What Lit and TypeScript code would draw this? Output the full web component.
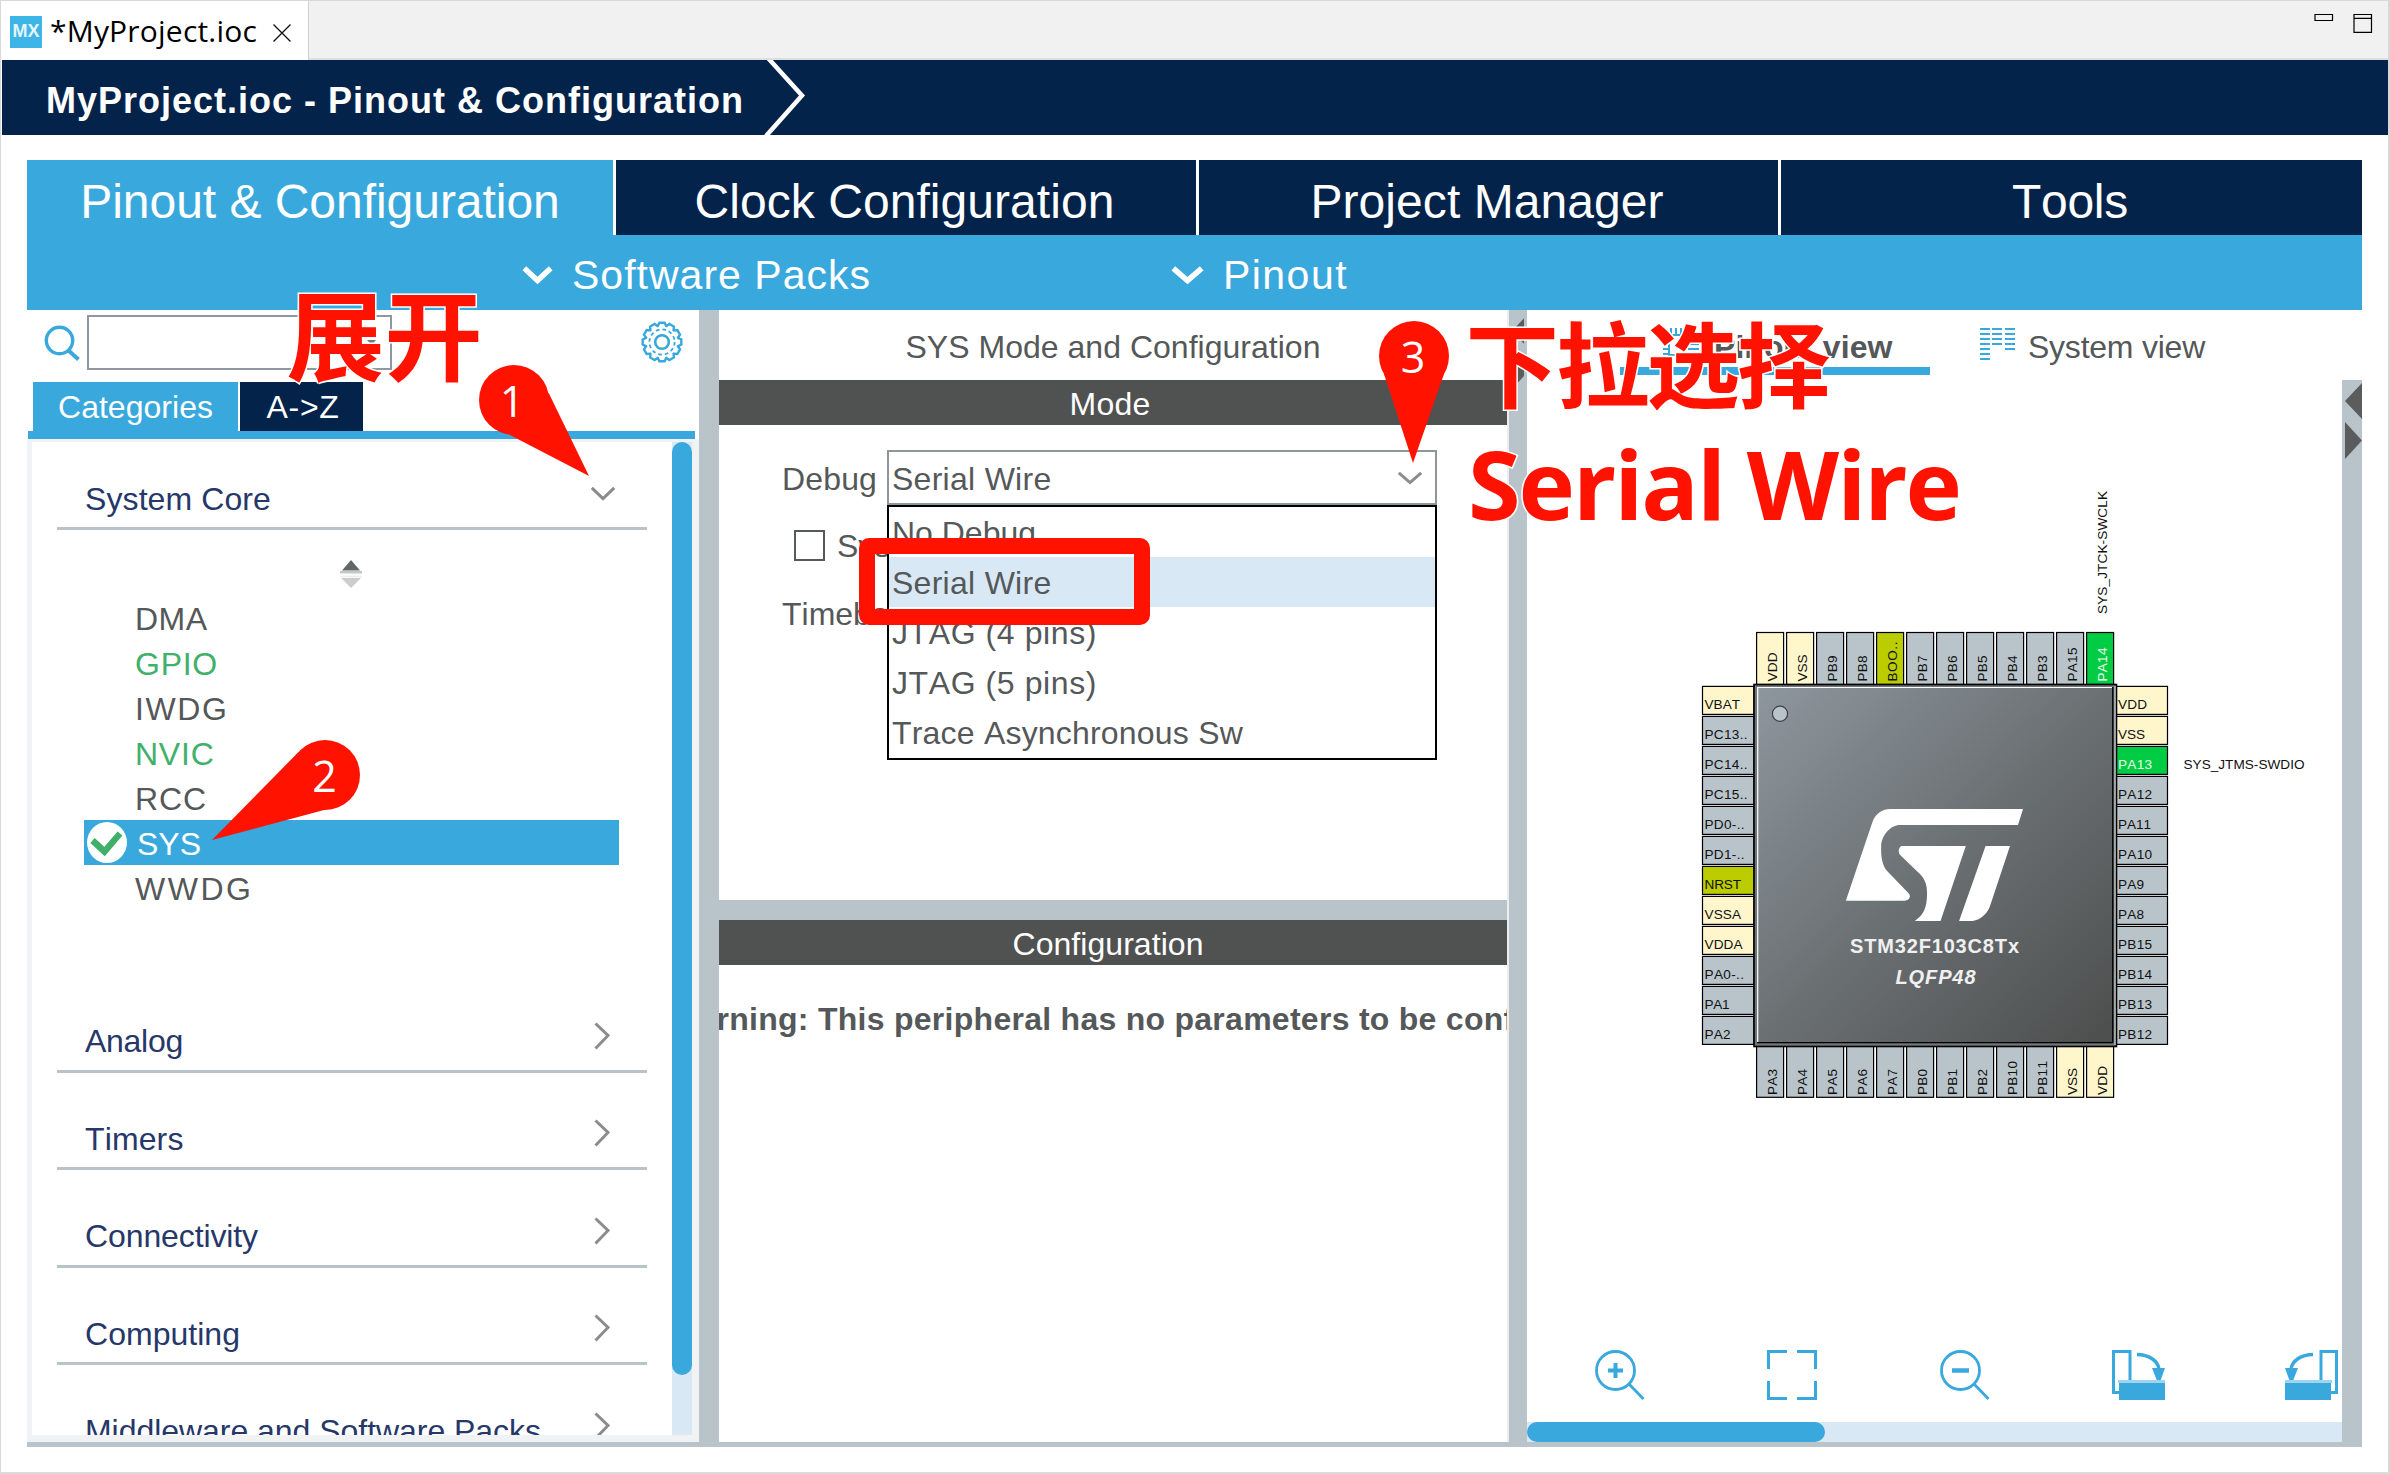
import { LitElement, html, svg, css, nothing } from "lit";
import { customElement, property } from "lit/decorators.js";
import { classMap } from "lit/directives/class-map.js";

/** One line of text whose tracking is computed so that it fills a given advance width. */
@customElement("fit-text")
class FitText extends LitElement {
  @property({ type: Number }) w = 0;
  @property() text = "";
  static styles = css`
    :host { display: inline-block; white-space: pre; flex: none; }
    .run { display: inline-block; white-space: pre; }
  `;
  protected updated() {
    const run = this.renderRoot.querySelector(".run") as HTMLElement;
    run.style.letterSpacing = "0";
    const natural = run.getBoundingClientRect().width;
    run.style.letterSpacing = `${(this.w - natural) / this.text.length}px`;
  }
  render() {
    return html`<span class="run">${this.text}</span>`;
  }
}

type Tone = "io" | "power" | "active" | "special";
interface Pin { name: string; tone: Tone; w: number; }
const pin = (name: string, w: number, tone: Tone = "io"): Pin => ({ name, w, tone });

const LEFT = [
  pin("VBAT", 35.5, "power"), pin("PC13..", 43), pin("PC14..", 43), pin("PC15..", 43), pin("PD0-..", 40), pin("PD1-..", 40),
  pin("NRST", 36.5, "special"), pin("VSSA", 36.5, "power"), pin("VDDA", 38, "power"), pin("PA0-..", 39.5), pin("PA1", 25), pin("PA2", 26),
];
const RIGHT = [
  pin("VDD", 29, "power"), pin("VSS", 27, "power"), pin("PA13", 34, "active"), pin("PA12", 34), pin("PA11", 33), pin("PA10", 34),
  pin("PA9", 26), pin("PA8", 26), pin("PB15", 34), pin("PB14", 34), pin("PB13", 34), pin("PB12", 34),
];
const TOP = [
  pin("VDD", 29, "power"), pin("VSS", 27, "power"), pin("PB9", 26), pin("PB8", 26), pin("BOO..", 40, "special"), pin("PB7", 26),
  pin("PB6", 26), pin("PB5", 26), pin("PB4", 26), pin("PB3", 26), pin("PA15", 34), pin("PA14", 34, "active"),
];
const BOTTOM = [
  pin("PA3", 26), pin("PA4", 26), pin("PA5", 26), pin("PA6", 26), pin("PA7", 26), pin("PB0", 26),
  pin("PB1", 26), pin("PB2", 26), pin("PB10", 34), pin("PB11", 34), pin("VSS", 27, "power"), pin("VDD", 29, "power"),
];
const FILL: Record<Tone, string> = { io: "#b8c4ca", power: "#fff6cc", active: "#02cc44", special: "#bbcc00" };

/** Package drawing of the microcontroller with its 48 pins. */
@customElement("chip-view")
class ChipView extends LitElement {
  static styles = css`
    :host { display: block; }
    svg { display: block; }
    .pin { stroke: #000; stroke-width: 1.2; }
    .lbl { font: 13.6px "Liberation Sans", sans-serif; fill: #111; font-kerning: none; }
    .on { fill: #e9ffe9; }
    .name { font: bold 20px "Liberation Sans", sans-serif; fill: #f0f0f0; }
    .it { font-style: italic; }
  `;
  private side(p: Pin, i: number, x: number, tx: number) {
    const y = 686.4 + i * 30;
    return svg`<rect class="pin" x=${x} y=${y} width="51.5" height="28" fill=${FILL[p.tone]}></rect>
      <text class=${p.tone === "active" ? "lbl on" : "lbl"} x=${tx} y=${y + 22.2} textLength=${p.w}>${p.name}</text>`;
  }
  private end(p: Pin, i: number, y: number, ty: number) {
    const x = 1756.6 + i * 30;
    return svg`<rect class="pin" x=${x} y=${y} width="27" height="52" fill=${FILL[p.tone]}></rect>
      <text class=${p.tone === "active" ? "lbl on" : "lbl"} transform="translate(${x + 20.8} ${ty}) rotate(-90)" textLength=${p.w}>${p.name}</text>`;
  }
  render() {
    return html`<svg width="815" height="960" viewBox="1527 380 815 960">
      <defs>
        <linearGradient id="body" x1="0" y1="0" x2="1" y2="1">
          <stop offset="0" stop-color="#8e979e"></stop>
          <stop offset="0.5" stop-color="#6b7073"></stop>
          <stop offset="1" stop-color="#4c4e4d"></stop>
        </linearGradient>
      </defs>
      ${LEFT.map((p, i) => this.side(p, i, 1702.5, 1704.5))}
      ${RIGHT.map((p, i) => this.side(p, i, 2116, 2118))}
      ${TOP.map((p, i) => this.end(p, i, 632.5, 681.5))}
      ${BOTTOM.map((p, i) => this.end(p, i, 1045.3, 1095))}
      <rect x="1754" y="684.5" width="362.5" height="362" fill="#6f7578" stroke="#000" stroke-width="1.6"></rect>
      <rect x="1757.5" y="687.5" width="355.5" height="355" fill="url(#body)"></rect>
      <path d="M1757.7 1042V687.5H2112" fill="none" stroke="#fff" stroke-width="1.2"></path>
      <path d="M2112.8 687V1042.6H1757" fill="none" stroke="#000" stroke-width="1.4"></path>
      <path d="M2115 686V1045" fill="none" stroke="#b8bcbe" stroke-width="1.4"></path>
      <circle cx="1780" cy="713.7" r="7.6" fill="#b8c4ca" stroke="#3c4144" stroke-width="1.2"></circle>
      <g transform="translate(1680 790) scale(.4209 .3333)" fill="#fff">
        <path d="M815 57H500C478 57 462 75 457 97L394 332H534C546 330 550 318 542 308L492 243C480 225 477 200 478 165C480 135 500 105 523 105H803Z"></path>
        <path d="M526 168H679L619 393H558C578 375 587 355 587 310C587 280 580 262 565 246L523 195C517 185 520 172 526 168Z"></path>
        <path d="M726 168H784L738 343C732 370 715 390 695 393H663Z"></path>
      </g>
      <text class="name" x="1850" y="953" textLength="169">STM32F103C8Tx</text>
      <text class="name it" x="1895.5" y="984" textLength="80">LQFP48</text>
      <text class="lbl" x="2183.5" y="768.6" textLength="121">SYS_JTMS-SWDIO</text>
      <text class="lbl" transform="translate(2107.4 614) rotate(-90)" textLength="123">SYS_JTCK-SWCLK</text>
    </svg>`;
  }
}

const chevDown = (w: number, h: number, c: string, sw: number) => html`<svg width=${w} height=${h} viewBox="0 0 ${w} ${h}">
  <path d="M${sw * 0.6} ${sw * 0.6}L${w / 2} ${h - sw * 0.8}L${w - sw * 0.6} ${sw * 0.6}" fill="none" stroke=${c} stroke-width=${sw}></path></svg>`;
const chevRight = html`<svg width="16" height="28" viewBox="0 0 16 28"><path d="M1.5 1.5L14 13.5L1.5 26.5" fill="none" stroke="#8c8c8c" stroke-width="3"></path></svg>`;

const ITEMS: [string, number, boolean][] = [
  ["DMA", 72.5, false], ["GPIO", 83, true], ["IWDG", 93.5, false], ["NVIC", 79.5, true], ["RCC", 72, false], ["SYS", 64, false], ["WWDG", 118.5, false],
];
const GROUPS: [string, number][] = [
  ["Analog", 98], ["Timers", 98.5], ["Connectivity", 173], ["Computing", 155], ["Middleware and Software Packs", 456],
];
const OPTIONS: [string, number][] = [
  ["No Debug", 144], ["Serial Wire", 159.5], ["JTAG (4 pins)", 205], ["JTAG (5 pins)", 205], ["Trace Asynchronous Sw", 351],
];

@customElement("app-root")
class AppRoot extends LitElement {
  static styles = css`
    :host { display: block; font-family: "Liberation Sans", Arial, sans-serif; font-kerning: none; font-size: 32px; color: #555859; }
    * { box-sizing: border-box; }
    svg { display: block; flex: none; }
    .window { position: relative; width: 2390px; height: 1474px; overflow: hidden; background: #fff;
      border: 1px solid #d8d8d8; border-right-width: 2px; border-bottom: 2px solid #dcdcdc; display: flex; flex-direction: column; }
    .strip { height: 59px; flex: none; display: flex; background: #f1f1f1; border-bottom: 2px solid #dedede; }
    .file { width: 308px; height: 59px; background: #fff; border-right: 1px solid #d0d0d0; display: flex; align-items: center;
      padding-left: 9px; color: #000; font-family: "Open Sans", "Noto Sans", sans-serif; font-size: 30px; }
    .mx { width: 32px; height: 32px; background: #3db5e6; color: #e4f5fc; font: bold 18px/31px "Liberation Sans", sans-serif; text-align: center; margin: 2px 8px 0 0; }
    .file svg { margin-left: 16px; margin-top: 4px; }
    .wins { margin-left: auto; display: flex; padding: 12px 15.5px 0 0; gap: 19px; }
    .crumb { height: 75px; flex: none; margin: 0 0 0 1px; background: #03234b; display: flex; align-items: center; color: #fff; font-weight: bold; font-size: 36px; padding-left: 44px; }
    .crumb fit-text { padding-top: 6px; }
    .crumb svg { margin-left: 20px; }
    .work { margin: 25px 0 0 26px; width: 2335px; height: 1287px; display: flex; flex-direction: column; border-bottom: 5px solid #b8c4ca; flex: none; }
    .tabs { display: grid; grid-template-columns: 586px 580px 579px 581px; gap: 3px; height: 75px; flex: none; }
    .tab { background: #03234b; color: #fff; font-size: 48px; display: flex; align-items: center; justify-content: center; padding: 7px 3px 0 0; }
    .cur { background: #39a8dc; padding-right: 0; }
    .sub { height: 75px; flex: none; background: #39a8dc; color: #fff; font-size: 41px; display: flex; align-items: center; padding: 5px 0 0 494px; gap: 18px; }
    .gap { margin-left: 281px; }
    .cols { flex: 1; min-height: 0; display: flex; }
    .left { width: 672px; display: flex; flex-direction: column; }
    .search { height: 72px; flex: none; display: flex; padding: 5px 16px 0 17px; }
    .search .lens { margin-top: 10px; }
    .field { width: 305px; height: 55px; border: 2px solid #8f989e; margin-left: 6px; display: flex; justify-content: flex-end; align-items: center; padding-right: 14px; }
    .gear { margin: 6px 0 0 auto; }
    .cats { height: 49px; flex: none; display: flex; gap: 2px; padding-left: 6px; color: #fff; }
    .cat { display: flex; align-items: center; justify-content: center; width: 205px; background: #39a8dc; padding-top: 1px; }
    .az { width: 123px; background: #03234b; padding-left: 3px; }
    .rule { height: 8px; flex: none; background: #39a8dc; margin: 0 4px 0 1px; }
    .tree { flex: 1; min-height: 0; display: flex; border: solid #f1f2f3; border-width: 3px 7px 7px 5px; overflow: hidden; background: #fff; }
    .list { width: 640px; padding-left: 25px; overflow: hidden; }
    .group { width: 590px; height: 97.5px; display: flex; align-items: flex-end; justify-content: space-between; padding: 0 37px 0 28px; border-bottom: 3.5px solid #b8c4ca; color: #263769; line-height: 36px; }
    .group fit-text { margin-bottom: 10.4px; }
    .group svg { margin-bottom: 20px; }
    .core { height: 88px; padding-right: 31px; }
    .core svg { margin-bottom: 26px; }
    .ips { height: 445px; width: 562px; margin-left: 27px; padding-top: 30px; }
    .sort { margin: 0 0 7px 256px; }
    .ip { height: 45px; padding: 4px 0 0 51px; display: flex; align-items: center; }
    .used { color: #41b06b; }
    .sel { background: #39a8dc; color: #fff; padding: 0 0 0 3px; width: 535px; }
    .sel fit-text { margin-left: 10px; padding-top: 3px; }
    .vbar { width: 20px; background: #d9e8f5; }
    .vthumb { height: 933px; border-radius: 10px; background: #39a8dc; }
    .split { width: 20px; background: #b8c4ca; }
    .mid { width: 790px; display: flex; flex-direction: column; overflow: hidden; border-right: 2px solid #ededed; }
    .title { height: 70px; flex: none; display: flex; align-items: center; justify-content: center; padding-top: 5px; }
    .bar { height: 45px; flex: none; background: #505251; color: #fff; display: flex; align-items: center; justify-content: center; padding: 3px 6px 0 0; }
    .cfg { padding-right: 10px; }
    .form { height: 475px; flex: none; padding-top: 25px; }
    .row { display: flex; align-items: center; height: 40px; padding-left: 63px; }
    .row > span { padding-top: 2px; }
    .dbg { height: 55px; }
    .dbg fit-text { padding-top: 3px; }
    .combo { position: relative; width: 550px; height: 55px; margin-left: 10px; border: 2px solid #8f9699; display: flex; align-items: center; justify-content: space-between; padding: 0 12px 0 3px; }
    .popup { position: absolute; left: -2px; top: 53px; width: 550px; border: 2px solid #000; background: #fff; z-index: 1; padding-bottom: 1px; }
    .opt { height: 50px; padding-left: 3px; display: flex; align-items: center; }
    .hot { background: #d9e8f5; }
    .chk { margin-top: 20px; padding-left: 75px; }
    .box { width: 31px; height: 31px; border: 2px solid #56595a; margin-right: 12px; }
    .tb { margin-top: 28px; }
    .hsplit { height: 20px; flex: none; background: #b8c4ca; }
    .warn { margin: 34px 0 0 -51px; font-weight: bold; line-height: 40px; white-space: pre; letter-spacing: 0.27px; }
    .div { width: 18px; background: #b8c4ca; padding: 3px 0 0 2px; }
    .right { width: 835px; display: flex; flex-direction: column; }
    .views { height: 70px; flex: none; display: flex; align-items: flex-start; }
    .view { display: flex; margin-left: 93px; width: 310px; height: 65px; border-bottom: 8px solid #39a8dc; font-weight: bold; padding: 18px 0 0 43px; gap: 13px; }
    .view fit-text, .sys fit-text { padding-top: 0.6px; line-height: 36px; }
    .sys { display: flex; padding-top: 18px; margin-left: 50px; gap: 13px; }
    .body { flex: 1; min-height: 0; display: flex; }
    .canvas { width: 815px; display: flex; flex-direction: column; }
    .tools { height: 82px; display: grid; grid-template-columns: 172px 173px 172px 173px 53px; padding: 10px 0 0 68px; }
    .hbar { height: 20px; background: #d9e8f5; }
    .hthumb { width: 298px; height: 20px; border-radius: 10px; background: #39a8dc; }
    .edge { width: 20px; background: #b8c4ca; padding: 2.6px 0 0 2px; }
    .notes { position: absolute; left: -1px; top: -1px; z-index: 3; }
    .num { font: 43px "Open Sans", "Noto Sans", sans-serif; fill: #fff; text-anchor: middle; }
    .zh { font: bold 98px "Noto Sans CJK SC", sans-serif; fill: #ff1200; stroke: #fff; stroke-width: 3px; paint-order: stroke; }
    .zh2 { font-size: 93.5px; }
    .en { font: bold 95.5px "Open Sans", "Noto Sans", sans-serif; fill: #ff1200; stroke: #fff; stroke-width: 3px; paint-order: stroke; }
  `;

  private arrows(w = 18) {
    return html`<svg width=${w} height="78" viewBox="0 0 ${w} 78"><path d="M18 0V36L1 18Z M1 39V76L18 57.5Z" fill="#5a5c5d"></path></svg>`;
  }

  private gear() {
    const teeth = Array.from({ length: 12 }, (_, i) => i * 30);
    return html`<svg class="gear" width="42" height="42" viewBox="-21 -21 42 42" fill="none" stroke="#39a8dc">
      ${teeth.map((a) => svg`<path transform="rotate(${a})" d="M-4.6 -15.2L-2.6 -19.3H2.6L4.6 -15.2" stroke-width="2.4"></path>`)}
      <circle r="12.6" stroke-width="1.8" stroke-dasharray="3.6 3"></circle>
      <circle r="6.8" stroke-width="2.6"></circle></svg>`;
  }

  private left() {
    return html`<div class="left">
      <div class="search">
        <svg class="lens" width="37" height="37" viewBox="0 0 37 37" fill="none" stroke="#39a8dc" stroke-width="3.4"><circle cx="15.5" cy="15.5" r="13.2"></circle><path d="M24.5 25.5L34.5 34.5" stroke-width="4"></path></svg>
        <div class="field"><svg width="9" height="5" viewBox="0 0 9 5"><path d="M0 0H9L4.5 5Z" fill="#777"></path></svg></div>
        ${this.gear()}
      </div>
      <div class="cats">
        <div class="cat"><fit-text w="155" text="Categories"></fit-text></div>
        <div class="cat az"><fit-text w="73" text="A->Z"></fit-text></div>
      </div>
      <div class="rule"></div>
      <div class="tree">
        <div class="list">
          <div class="group core"><fit-text w="186" text="System Core"></fit-text>${chevDown(26, 15, "#8c8c8c", 3)}</div>
          <div class="ips">
            <svg class="sort" width="22" height="28" viewBox="0 0 22 28"><path d="M11 0L20 10.5H2Z" fill="#606869"></path><path d="M0 11H22V13.5H0Z" fill="#c6c8c8"></path><path d="M0 15.5H22V17.5H0Z" fill="#efefef"></path><path d="M1 18H21L11 28Z" fill="#cdcdcd"></path></svg>
            ${ITEMS.map(([t, w, used]) => html`<div class=${classMap({ ip: true, used, sel: t === "SYS" })}>
              ${t === "SYS" ? html`<svg width="40" height="41" viewBox="0 0 40 41"><ellipse cx="20" cy="20.5" rx="20" ry="20.5" fill="#fff"></ellipse><path d="M5.5 18.5L17.5 29.5L33 11.5" fill="none" stroke="#3fb06a" stroke-width="6.5"></path></svg>` : nothing}
              <fit-text w=${w} text=${t}></fit-text></div>`)}
          </div>
          ${GROUPS.map(([t, w]) => html`<div class="group"><fit-text w=${w} text=${t}></fit-text>${chevRight}</div>`)}
        </div>
        <div class="vbar"><div class="vthumb"></div></div>
      </div>
    </div>`;
  }

  private middle() {
    return html`<div class="mid">
      <div class="title"><fit-text w="415" text="SYS Mode and Configuration"></fit-text></div>
      <div class="bar"><fit-text w="81" text="Mode"></fit-text></div>
      <div class="form">
        <div class="row dbg"><fit-text w="95" text="Debug"></fit-text>
          <div class="combo"><fit-text w="159.5" text="Serial Wire"></fit-text>${chevDown(26, 14, "#8c8c8c", 3)}
            <div class="popup">${OPTIONS.map(([t, w], i) => html`<div class=${classMap({ opt: true, hot: i === 1 })}><fit-text w=${w} text=${t}></fit-text></div>`)}</div>
          </div>
        </div>
        <div class="row chk"><div class="box"></div><span>System Wake-Up</span></div>
        <div class="row tb"><span>Timebase Source</span></div>
      </div>
      <div class="hsplit"></div>
      <div class="bar cfg"><fit-text w="191" text="Configuration"></fit-text></div>
      <div class="warn">Warning: This peripheral has no parameters to be configured</div>
    </div>`;
  }

  private right() {
    const dots: [number, number][] = [[0, 7], [12, 4], [25, 5]];
    return html`<div class="right">
      <div class="views">
        <div class="view">
          <svg width="38" height="34" viewBox="0 0 38 34" stroke="#39a8dc" stroke-width="2" fill="none">
            <path d="M8 0V7M13 0V7M18 0V7M8 27V34M13 27V34M18 27V34M0 11H6M0 16H6M0 21H6M0 26H6"></path><path d="M6 7H22V27H6Z"></path><path d="M25 6H36M25 11H36M25 16H36M25 21H36M25 26H36"></path></svg>
          <fit-text w="178.5" text="Pinout view"></fit-text>
        </div>
        <div class="sys">
          <svg width="35" height="34" viewBox="0 0 35 34">${dots.map(([x, n]) => Array.from({ length: n }, (_, i) => svg`<rect x=${x} y=${i * 5} width="10" height="2" fill="#39a8dc"></rect>`))}</svg>
          <fit-text w="177" text="System view"></fit-text>
        </div>
      </div>
      <div class="body">
        <div class="canvas">
          <chip-view></chip-view>
          <div class="tools">
            <svg width="50" height="50" viewBox="0 0 50 50" fill="none" stroke="#39a8dc" stroke-width="2.8"><circle cx="20.5" cy="20.5" r="19"></circle><path d="M34 34L48.5 49"></path><path d="M13 20.5H28M20.5 13V28" stroke-width="4"></path></svg>
            <svg width="50" height="50" viewBox="0 0 50 50" fill="none" stroke="#39a8dc" stroke-width="3"><path d="M1.5 19V1.5H20M30 1.5H48.5V19M48.5 31V48.5H30M20 48.5H1.5V31"></path></svg>
            <svg width="50" height="50" viewBox="0 0 50 50" fill="none" stroke="#39a8dc" stroke-width="2.8"><circle cx="20.5" cy="20.5" r="19"></circle><path d="M34 34L48.5 49"></path><path d="M12 20.5H29" stroke-width="4.5"></path></svg>
            <svg width="53" height="50" viewBox="0 0 53 50" fill="none" stroke="#39a8dc" stroke-width="3"><path d="M18 32V1.5H1.5V42.5H8"></path><path d="M25 4.5C37 4.5 46 11 47 19" stroke-width="3.4"></path><path d="M40 18H53L48 32H45.5Z" fill="#39a8dc" stroke="none"></path><path d="M6 30H53V33H6Z" fill="#9fd4ee" stroke="none"></path><path d="M7 33H53V50H7Z" fill="#39a8dc" stroke="none"></path></svg>
            <svg width="53" height="50" viewBox="0 0 53 50" fill="none" stroke="#39a8dc" stroke-width="3"><path d="M36 32V1.5H51.5V42.5H46"></path><path d="M28 4.5C16 4.5 7 11 6 19" stroke-width="3.4"></path><path d="M0 18H13L7.5 32H5Z" fill="#39a8dc" stroke="none"></path><path d="M0 30H47V33H0Z" fill="#9fd4ee" stroke="none"></path><path d="M0 33H46V50H0Z" fill="#39a8dc" stroke="none"></path></svg>
          </div>
          <div class="hbar"><div class="hthumb"></div></div>
        </div>
        <div class="edge">${this.arrows()}</div>
      </div>
    </div>`;
  }

  render() {
    return html`<div class="window">
      <div class="strip">
        <div class="file"><div class="mx">MX</div><fit-text w="207" text="*MyProject.ioc"></fit-text>
          <svg width="18" height="18" viewBox="0 0 18 18"><path d="M0.5 0.5L17.5 17.5M17.5 0.5L0.5 17.5" stroke="#111" stroke-width="1.3"></path></svg></div>
        <div class="wins">
          <svg width="20" height="20" viewBox="0 0 20 20"><path d="M1 1.5H18.5V7.5H1Z" fill="none" stroke="#000" stroke-width="1.2"></path></svg>
          <svg width="20" height="20" viewBox="0 0 20 20"><path d="M1 1.5H18.5V19.3H1ZM1 5.3H18.5" fill="none" stroke="#000" stroke-width="1.2"></path></svg>
        </div>
      </div>
      <div class="crumb"><fit-text w="698" text="MyProject.ioc - Pinout &amp; Configuration"></fit-text>
        <svg width="46" height="75" viewBox="0 0 46 75"><path d="M4 -2L38 35.5L2 76" fill="none" stroke="#fff" stroke-width="4.5"></path></svg></div>
      <div class="work">
        <div class="tabs">
          <div class="tab cur"><fit-text w="479.5" text="Pinout &amp; Configuration"></fit-text></div>
          <div class="tab"><fit-text w="420" text="Clock Configuration"></fit-text></div>
          <div class="tab"><fit-text w="353" text="Project Manager"></fit-text></div>
          <div class="tab"><fit-text w="116" text="Tools"></fit-text></div>
        </div>
        <div class="sub">${chevDown(33, 20, "#fff", 5.5)}<fit-text w="299" text="Software Packs"></fit-text>
          <span class="gap">${chevDown(35, 20, "#fff", 5.5)}</span><fit-text w="125" text="Pinout"></fit-text></div>
        <div class="cols">
          ${this.left()}
          <div class="split"></div>
          ${this.middle()}
          <div class="div">${this.arrows(13)}</div>
          ${this.right()}
        </div>
      </div>
      <svg class="notes" width="2390" height="1474" viewBox="0 0 2390 1474">
        <rect x="867" y="546" width="275" height="71" rx="2" fill="none" stroke="#ff1200" stroke-width="16" stroke-linejoin="round"></rect>
        <g fill="#ff1200">
          <circle cx="514" cy="400" r="35"></circle><path d="M548.7 393L589 476L510 435Z"></path>
          <circle cx="325" cy="775" r="35"></circle><path d="M298.5 752L212 840L325 809.8Z"></path>
          <circle cx="1414" cy="356" r="35"></circle><path d="M1384 374L1413 463L1444 374Z"></path>
        </g>
        <text class="num" x="512" y="417">1</text>
        <text class="num" x="324.5" y="792">2</text>
        <text class="num" x="1413" y="373">3</text>
        <text class="zh" x="286.5" y="373" textLength="196">展开</text>
        <text class="zh zh2" x="1465.5" y="401" textLength="365">下拉选择</text>
        <text class="en" x="1468" y="519.5" textLength="494">Serial Wire</text>
      </svg>
    </div>`;
  }
}
